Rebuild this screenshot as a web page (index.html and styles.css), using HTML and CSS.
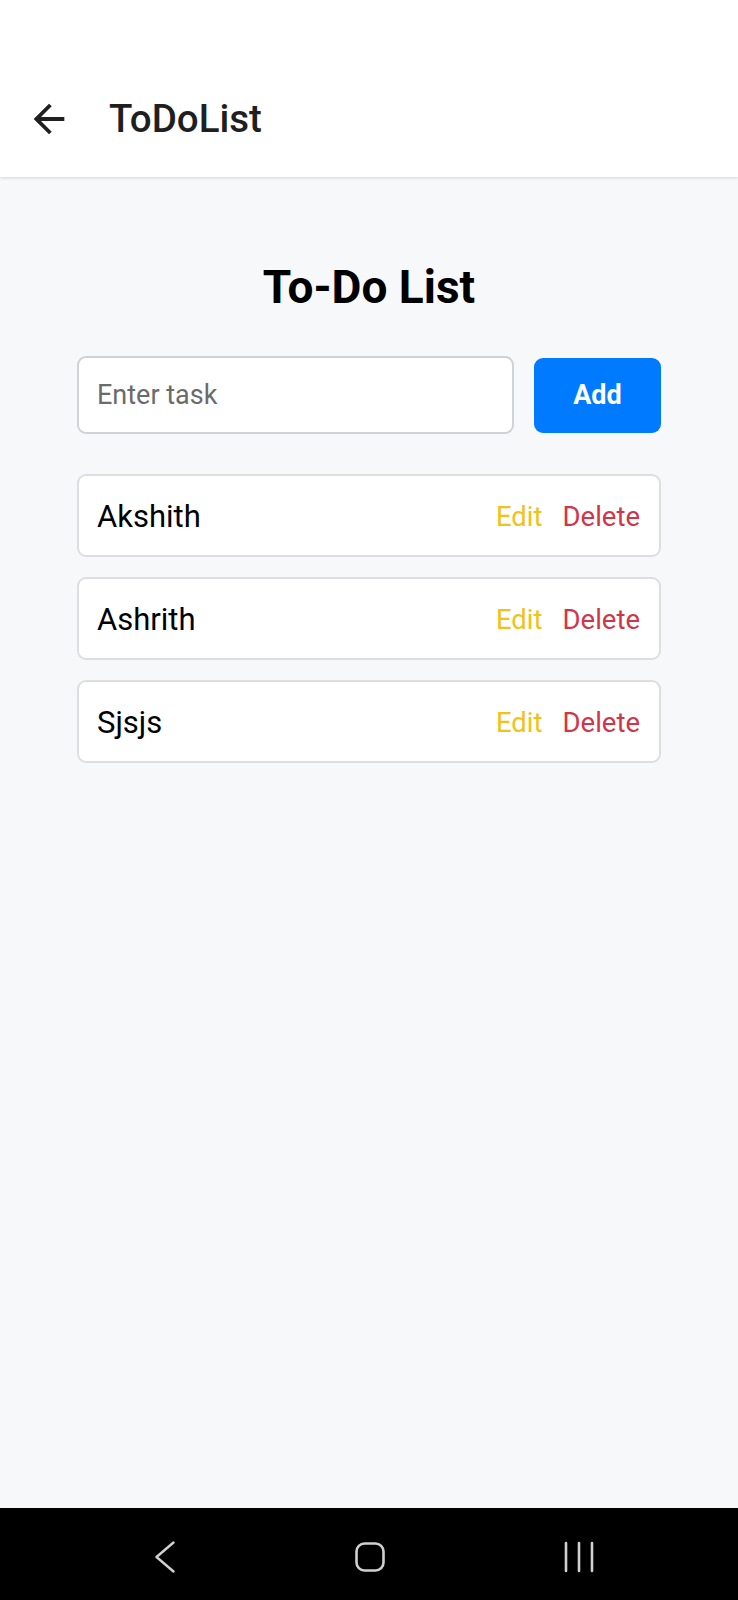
FILE: index.html
```html
<!DOCTYPE html>
<html lang="en">
<head>
<meta charset="utf-8">
<title>ToDoList</title>
<link rel="stylesheet" href="styles.css">
</head>
<body>
<div class="screen">
  <header class="appbar">
    <div class="statusbar"></div>
    <div class="toolbar">
      <svg class="back" viewBox="0 0 24 24" width="46" height="46"><path d="M20 11H7.83l5.59-5.59L12 4l-8 8 8 8 1.41-1.41L7.83 13H20v-2z" fill="#1f1f1f"/></svg>
      <span class="appbar-title">ToDoList</span>
    </div>
  </header>
  <main class="content">
    <h1 class="heading">To-Do List</h1>
    <div class="add-row">
      <input class="task-input" type="text" placeholder="Enter task">
      <button class="add-btn">Add</button>
    </div>
    <ul class="tasks">
      <li class="task"><span class="task-name">Akshith</span><span class="actions"><span class="edit">Edit</span><span class="delete">Delete</span></span></li>
      <li class="task"><span class="task-name">Ashrith</span><span class="actions"><span class="edit">Edit</span><span class="delete">Delete</span></span></li>
      <li class="task"><span class="task-name">Sjsjs</span><span class="actions"><span class="edit">Edit</span><span class="delete">Delete</span></span></li>
    </ul>
  </main>
  <nav class="navbar">
    <svg class="nav-icon nav-back" viewBox="0 0 22 32" width="22" height="32"><path d="M19.5 1.5 L2.5 16 L19.5 30.5" fill="none" stroke="#d0d0d0" stroke-width="2.4" stroke-linecap="round" stroke-linejoin="round"/></svg>
    <svg class="nav-icon nav-home" viewBox="0 0 32 32" width="32" height="32"><rect x="2.5" y="2.5" width="27" height="27" rx="8" fill="none" stroke="#d0d0d0" stroke-width="2.6"/></svg>
    <svg class="nav-icon nav-recent" viewBox="0 0 32 32" width="32" height="32"><path d="M3 2v28M16 2v28M29 2v28" fill="none" stroke="#d0d0d0" stroke-width="2.6" stroke-linecap="round"/></svg>
  </nav>
</div>
</body>
</html>
```
FILE: styles.css
```css
* { box-sizing: border-box; }
html, body { margin: 0; padding: 0; }
body {
  font-family: Roboto, "Liberation Sans", Arial, sans-serif;
  background: #f7f8fa;
}
.screen {
  display: flex;
  flex-direction: column;
  min-height: 1600px;
}
.appbar {
  background: #ffffff;
  height: 177px;
  box-shadow: 0 1px 3px rgba(0, 0, 0, 0.14);
  position: relative;
  z-index: 1;
}
.statusbar { height: 60px; }
.toolbar {
  height: 117px;
  display: flex;
  align-items: center;
  padding-left: 26px;
}
.back { display: block; flex: none; }
.appbar-title {
  margin-left: 37px;
  font-size: 38.5px;
  font-weight: 500;
  color: #1f1f1f;
  line-height: 1;
  position: relative;
  top: 1px;
}
.content {
  flex: 1;
  width: 584px;
  margin: 0 auto;
  padding-top: 82px;
}
.heading {
  margin: 0;
  text-align: center;
  font-size: 46px;
  line-height: 56px;
  font-weight: 700;
  color: #000;
}
.add-row {
  display: flex;
  align-items: center;
  gap: 20px;
  margin-top: 41px;
}
.task-input {
  flex: 1;
  height: 78px;
  border: 2px solid #cfd2d6;
  border-radius: 9px;
  background: #fff;
  padding: 0 18px;
  font-family: Roboto, "Liberation Sans", Arial, sans-serif;
  font-size: 27px;
  color: #222;
  outline: none;
}
.task-input::placeholder { color: #6b6b6b; }
.add-btn {
  width: 127px;
  height: 75px;
  border: none;
  border-radius: 9px;
  background: #007bff;
  color: #fff;
  font-family: Roboto, "Liberation Sans", Arial, sans-serif;
  font-size: 27px;
  font-weight: 700;
  padding: 0;
}
.tasks {
  list-style: none;
  margin: 40px 0 0;
  padding: 0;
  display: flex;
  flex-direction: column;
  gap: 20px;
}
.task {
  height: 83px;
  background: #fff;
  border: 2px solid #dcdee1;
  border-radius: 9px;
  display: flex;
  align-items: center;
  justify-content: space-between;
  padding: 2px 19px 0 18px;
}
.task-name {
  font-size: 31px;
  color: #000;
}
.actions {
  display: flex;
  gap: 20px;
  font-size: 27.5px;
}
.edit { color: #f0c21a; }
.delete { color: #d0364a; }
.navbar {
  height: 92px;
  background: #000;
  display: flex;
  align-items: center;
  justify-content: center;
  padding-top: 6px;
  padding-left: 11px;
}
.nav-icon { display: block; }
.nav-back { margin-right: 178px; }
.nav-home { margin-right: 177px; }
```
